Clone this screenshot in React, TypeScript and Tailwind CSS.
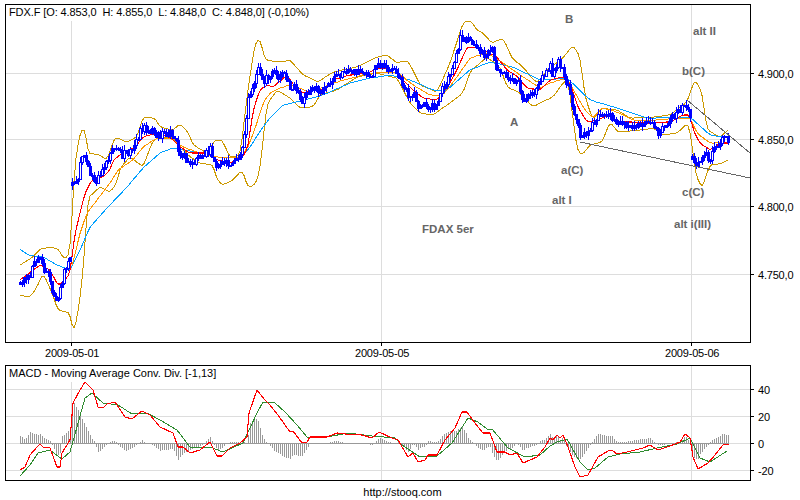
const close = [20,282,24,280,28,278,32,268,36,258,40,256,44,270,48,275,52,290,55,300,58,300,61,285,64,272,68,262,70,258,72,185,75,185,78,182,80,160,85,158,90,172,95,180,100,177,107,160,115,147,123,155,132,148,137,140,140,128,150,130,160,135,172,133,177,145,182,155,190,163,200,157,210,148,215,163,227,163,237,160,243,145,248,97,252,87,257,67,263,80,270,77,273,67,278,80,283,72,290,88,295,82,300,102,307,93,312,88,320,90,328,82,337,75,350,70,363,72,373,73,378,60,383,68,397,72,403,87,410,97,415,93,418,108,427,105,435,107,442,90,450,72,458,50,460,37,470,38,477,48,483,55,492,47,497,70,507,75,518,82,522,100,533,95,537,87,547,70,550,63,553,78,558,58,563,70,568,87,572,107,577,123,580,138,588,130,593,123,597,115,610,115,617,125,627,123,640,125,652,120,658,132,670,120,680,108,687,107,690,117,692,157,697,163,703,153,710,157,715,147,722,138,728,140];
const red = [20,280,33,270,40,265,50,270,58,285,63,282,71,272,73,243,80,213,85,193,92,180,103,177,110,170,113,160,123,153,135,147,143,137,157,133,170,137,180,147,190,153,207,153,217,160,230,163,243,157,248,147,253,110,260,90,267,85,273,87,287,75,295,87,303,93,313,90,323,90,333,80,350,75,367,73,380,68,397,70,403,80,413,90,423,98,437,100,447,88,457,70,467,47,477,48,487,52,497,57,507,70,518,77,527,88,540,90,550,80,563,77,570,83,578,107,587,122,597,120,610,115,617,122,630,122,643,123,653,123,670,122,683,115,690,115,693,130,700,143,710,150,720,143,729,143];
const orange = [72,267,80,233,87,213,97,200,110,183,118,170,133,160,143,147,157,138,170,138,183,147,200,153,217,157,240,157,248,147,257,123,263,103,270,93,280,88,290,85,310,92,337,82,370,73,397,72,413,85,430,95,443,95,457,77,470,58,487,53,503,63,523,77,540,88,550,83,567,78,575,93,585,110,593,118,602,108,617,112,633,120,653,120,677,118,690,118,697,133,710,143,728,142];
const sky = [20,249,28,255,43,257,57,265,70,270,80,250,90,227,107,208,127,187,143,168,160,153,173,148,197,152,217,157,240,157,248,150,263,127,270,118,283,105,303,100,323,95,350,83,370,78,390,75,410,80,433,90,447,90,470,70,490,62,513,67,540,80,567,78,590,100,617,108,647,118,690,117,710,135,728,138];
const upper = [20,265,33,257,40,249,50,247,58,249,65,260,71,250,73,187,75,163,80,133,85,127,88,153,100,155,107,160,115,137,127,142,137,137,143,117,155,118,160,127,173,130,180,124,188,132,193,145,207,153,215,140,222,140,230,157,240,155,248,90,255,43,260,39,265,60,280,62,290,60,303,75,310,78,318,82,333,72,357,67,377,57,387,55,397,63,407,60,413,70,420,85,437,92,450,63,463,23,470,20,477,30,483,33,492,43,503,38,512,58,523,67,532,78,537,83,547,70,563,58,573,45,580,57,585,97,593,120,602,108,617,110,630,118,653,117,670,115,687,102,690,93,695,79,702,93,707,130,720,137,728,130];
const lower = [20,295,30,297,37,287,43,273,52,293,58,310,70,313,73,335,78,313,83,273,88,198,100,187,110,192,117,183,120,168,130,157,143,167,153,140,163,137,173,138,190,157,200,163,213,165,217,180,223,185,233,180,242,170,248,187,255,185,260,170,262,150,267,103,270,100,277,90,290,98,300,108,313,107,320,95,337,90,357,77,377,73,397,78,410,103,420,113,433,115,450,103,463,93,470,72,487,57,500,67,507,87,520,93,533,107,540,103,553,97,563,83,568,80,572,110,577,150,582,155,590,145,602,142,610,122,618,132,640,130,653,128,663,135,677,133,688,123,692,143,695,173,702,188,707,173,710,165,723,163,729,159];
const macd = [20,470,25,467,30,455,37,447,40,444,43,447,50,448,57,467,60,467,62,453,70,440,73,403,80,390,85,382,93,390,98,407,103,408,107,404,115,402,125,417,132,419,142,411,150,415,160,427,173,433,178,447,183,447,190,453,200,450,210,442,217,456,222,456,230,448,240,443,247,437,249,413,257,390,265,400,270,405,278,415,290,432,293,431,302,443,307,442,310,437,327,437,337,433,345,434,362,435,372,438,379,432,392,438,398,440,408,457,413,453,418,462,425,460,428,455,437,455,445,440,455,428,462,412,467,412,475,423,483,433,490,433,497,452,505,452,510,455,517,453,523,463,530,460,537,457,545,447,550,438,553,440,557,435,560,438,563,435,568,447,575,467,580,477,588,475,598,457,608,451,612,450,617,454,627,452,643,448,650,445,658,450,670,446,680,442,685,434,690,438,693,457,698,469,708,463,715,455,723,445,729,444];
const signal = [20,476,30,465,38,453,50,450,62,459,70,452,77,427,85,398,92,393,103,403,118,405,132,414,147,413,160,420,177,430,190,447,210,447,223,452,243,443,257,413,263,402,275,403,285,412,297,425,307,437,327,437,348,433,372,436,395,438,402,445,420,457,437,456,452,443,468,418,478,422,487,429,492,429,508,448,525,457,540,455,550,446,557,442,567,439,580,462,588,470,595,468,608,457,620,454,640,452,657,448,677,444,690,438,700,458,710,462,727,451];

function lerp(d: number[], x: number) {
  if (x <= d[0]) return d[1];
  for (let i = 2; i < d.length; i += 2) {
    if (x <= d[i]) {
      const t = (x - d[i - 2]) / (d[i] - d[i - 2] || 1);
      return d[i - 1] + t * (d[i + 1] - d[i - 1]);
    }
  }
  return d[d.length - 1];
}
const pts = (d: number[]) => {
  const out: string[] = [];
  for (let i = 0; i < d.length; i += 2) out.push(d[i] + "," + d[i + 1]);
  return out.join(" ");
};
const smooth = (d: number[]) => {
  const out: number[] = [];
  const x0 = d[0];
  const x1 = d[d.length - 2];
  for (let x = x0; x <= x1; x += 2) {
    const y = (lerp(d, x - 2) + lerp(d, x) * 2 + lerp(d, x + 2)) / 4;
    out.push(x, Math.round(y * 2) / 2);
  }
  return out;
};
const noise = (n: number) => {
  const s = Math.sin(n * 12.9898) * 43758.5453;
  return (s - Math.floor(s)) * 2 - 1;
};
const xs: number[] = [];
for (let x = 20; x <= 728; x += 2) xs.push(x);

function Candles() {
  let prev = lerp(close, 20);
  return (
    <g stroke="#0000ff" strokeWidth={1} shapeRendering="crispEdges">
      {xs.map((x) => {
        const c = Math.round(lerp(close, x) + noise(x) * 4);
        const o = Math.abs(prev - c) > 30 ? c + 3 : prev;
        prev = c;
        const top = Math.min(o, c);
        const bot = Math.max(o, c);
        const hi = top - Math.round(Math.abs(noise(x + 0.37)) * 5);
        const lo = bot + Math.round(Math.abs(noise(x + 0.71)) * 5);
        const hollow = c < o && bot - top >= 6;
        return (
          <g key={x}>
            <line x1={x + 0.5} x2={x + 0.5} y1={hi} y2={lo} />
            <rect x={x - 0.5} y={top + 0.5} width={2} height={Math.max(bot - top, 1)} fill={hollow ? "#ffffff" : "#0000ff"} />
          </g>
        );
      })}
    </g>
  );
}

function Line({ d, color, w = 1 }: { d: number[]; color: string; w?: number }) {
  return <polyline points={pts(d)} fill="none" stroke={color} strokeWidth={w} shapeRendering="crispEdges" />;
}

function Grid({ h, v, y0, y1 }: { h: number[]; v: number[]; y0: number; y1: number }) {
  return (
    <g stroke="#dddddd" strokeWidth={1} shapeRendering="crispEdges">
      {h.map((y) => <line key={y} x1={6} x2={750} y1={y + 0.5} y2={y + 0.5} />)}
      {v.map((x) => <line key={x} x1={x + 0.5} x2={x + 0.5} y1={y0} y2={y1} />)}
    </g>
  );
}

function Note({ className, children }: { className: string; children: string }) {
  return <span className={`absolute font-bold text-[11.5px] leading-[14px] text-[#666666] whitespace-nowrap ${className}`}>{children}</span>;
}

function AxisRow({ label, className = "" }: { label: string; className?: string }) {
  return (
    <div className={`flex items-center h-[15px] gap-[4px] ${className}`}>
      <i className="block w-[3px] h-px bg-black" />
      <span className="text-[11px] leading-[14px] tracking-[-0.2px] text-black whitespace-nowrap">{label}</span>
    </div>
  );
}

function DateCell({ label }: { label: string }) {
  return (
    <div className="flex flex-col">
      <i className="block ml-[26px] w-px h-[3px] bg-black" />
      <span className="text-[11px] leading-[14px] tracking-[-0.2px] text-black whitespace-nowrap">{label}</span>
    </div>
  );
}

function ChartTitle({ children, className = "" }: { children: string; className?: string }) {
  return <div className={`absolute left-0 top-0 h-[16px] pl-[3px] pr-[2px] bg-white text-[11px] leading-[15px] text-black whitespace-pre ${className}`}>{children}</div>;
}

export default function App() {
  return (
    <div className="flex flex-col w-[800px] h-[500px] bg-white overflow-hidden [font-family:'Liberation_Sans',Arial,sans-serif] pt-[4px] pl-[5px]">
      <div className="flex h-[339px]">
        <div className="relative w-[746px] h-[339px] border border-black">
          <svg className="block" width={744} height={337} viewBox="6 5 744 337">
            <Grid h={[73, 139, 206, 274]} v={[71, 381, 691]} y0={5} y1={342} />
            <Line d={smooth(upper)} color="#cc9900" />
            <Line d={smooth(lower)} color="#cc9900" />
            <Line d={smooth(sky)} color="#00a0ff" />
            <Line d={smooth(orange)} color="#ff9900" />
            <Line d={smooth(red)} color="#ff0000" w={1.1} />
            <Candles />
            <polyline points="580,142 750,178" fill="none" stroke="#666666" shapeRendering="crispEdges" />
            <polyline points="687,100 750,153" fill="none" stroke="#666666" shapeRendering="crispEdges" />
          </svg>
          <ChartTitle className="tracking-[-0.1px]">FDX.F [O: 4.853,0  H: 4.855,0  L: 4.848,0  C: 4.848,0] (-0,10%)</ChartTitle>
          <Note className="left-[559px] top-[7px]">B</Note>
          <Note className="left-[687px] top-[19px]">alt II</Note>
          <Note className="left-[676px] top-[59px]">b(C)</Note>
          <Note className="left-[504px] top-[110px]">A</Note>
          <Note className="left-[555px] top-[158px]">a(C)</Note>
          <Note className="left-[546px] top-[188px]">alt I</Note>
          <Note className="left-[676px] top-[180px]">c(C)</Note>
          <Note className="left-[668px] top-[212px]">alt i(III)</Note>
          <Note className="left-[416px] top-[217px]">FDAX 5er</Note>
        </div>
        <div className="flex flex-col pt-[62px]">
          <AxisRow label="4.900,0" />
          <AxisRow label="4.850,0" className="mt-[51px]" />
          <AxisRow label="4.800,0" className="mt-[52px]" />
          <AxisRow label="4.750,0" className="mt-[53px]" />
        </div>
      </div>

      <div className="grid grid-cols-[310px_310px_1fr] h-[22px] pl-[40px]">
        <DateCell label="2009-05-01" />
        <DateCell label="2009-05-05" />
        <DateCell label="2009-05-06" />
      </div>

      <div className="flex h-[116px]">
        <div className="relative w-[746px] h-[116px] border border-black">
          <svg className="block" width={744} height={114} viewBox="6 366 744 114">
            <Grid h={[389, 416, 443, 470]} v={[71, 381, 691]} y0={366} y1={480} />
            <line x1={20} x2={729} y1={443.5} y2={443.5} stroke="#999999" shapeRendering="crispEdges" />
            <g stroke="#999999" shapeRendering="crispEdges">
              {xs.map((x) => {
                const h = Math.round((lerp(signal, x) - lerp(macd, x)) * 1.1);
                return <line key={x} x1={x + 0.5} x2={x + 0.5} y1={443} y2={443 - h} />;
              })}
            </g>
            <Line d={signal} color="#2e8b2e" />
            <Line d={macd} color="#ff0000" w={1.1} />
          </svg>
          <ChartTitle>MACD - Moving Average Conv. Div. [-1,13]</ChartTitle>
        </div>
        <div className="flex flex-col gap-[12px] pt-[17px]">
          <AxisRow label="40" />
          <AxisRow label="20" />
          <AxisRow label="0" />
          <AxisRow label="-20" />
        </div>
      </div>

      <div className="mt-[4px] text-center text-[11px] leading-[14px] text-black">http://stooq.com</div>
    </div>
  );
}
